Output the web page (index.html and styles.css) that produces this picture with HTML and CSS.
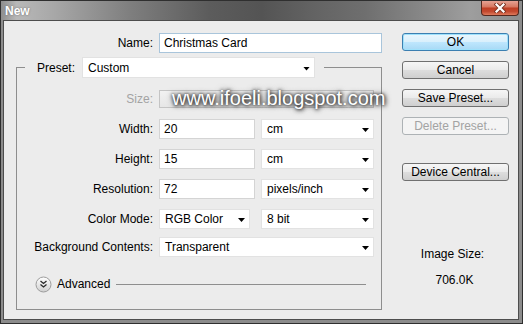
FILE: index.html
```html
<!DOCTYPE html>
<html>
<head>
<meta charset="utf-8">
<title>New</title>
<link rel="stylesheet" href="styles.css">
</head>
<body>
<div class="window">
  <div class="titlebar">
    <span class="title">New</span>
    <div class="close">
      <svg width="12" height="10" viewBox="0 0 12 10">
        <path d="M2.5 1.5 L9.5 8.5 M9.5 1.5 L2.5 8.5" stroke="#7a3424" stroke-width="4" stroke-linecap="square"/>
        <path d="M2.5 1.5 L9.5 8.5 M9.5 1.5 L2.5 8.5" stroke="#ffffff" stroke-width="2.2" stroke-linecap="square"/>
      </svg>
    </div>
  </div>
  <div class="client">
    <div class="left">
      <div class="name-row">
        <span class="label name-label">Name:</span>
        <div class="field input focus">Christmas Card</div>
      </div>
      <fieldset class="group">
        <legend class="preset">
          <span class="preset-label">Preset:</span>
          <div class="field select preset-select">Custom<span class="arrow"></span></div>
        </legend>
        <div class="rows">
          <div class="row row-size">
            <span class="label disabled">Size:</span>
            <div class="field disabled-field wide"></div>
          </div>
          <div class="row">
            <span class="label">Width:</span>
            <div class="field input num">20</div>
            <div class="field select unit">cm<span class="arrow"></span></div>
          </div>
          <div class="row">
            <span class="label">Height:</span>
            <div class="field input num">15</div>
            <div class="field select unit">cm<span class="arrow"></span></div>
          </div>
          <div class="row">
            <span class="label">Resolution:</span>
            <div class="field input num">72</div>
            <div class="field select unit">pixels/inch<span class="arrow"></span></div>
          </div>
          <div class="row">
            <span class="label">Color Mode:</span>
            <div class="field select mode">RGB Color<span class="arrow"></span></div>
            <div class="field select unit">8 bit<span class="arrow"></span></div>
          </div>
          <div class="row row-bg">
            <span class="label">Background Contents:</span>
            <div class="field select wide">Transparent<span class="arrow"></span></div>
          </div>
        </div>
        <div class="advanced">
          <svg class="adv-icon" width="17" height="17" viewBox="0 0 17 17">
            <defs>
              <linearGradient id="g" x1="0" y1="0" x2="0" y2="1">
                <stop offset="0" stop-color="#ffffff"/>
                <stop offset="1" stop-color="#cfcfcf"/>
              </linearGradient>
            </defs>
            <circle cx="8.5" cy="8.5" r="7.5" fill="url(#g)" stroke="#9c9c9c"/>
            <path d="M5.5 5 L8.5 7.5 L11.5 5 M5.5 8.5 L8.5 11 L11.5 8.5" fill="none" stroke="#2a2a2a" stroke-width="1.3"/>
          </svg>
          <span class="adv-text">Advanced</span>
          <span class="adv-line"></span>
        </div>
      </fieldset>
    </div>
    <div class="right">
      <div class="btn ok">OK</div>
      <div class="btn">Cancel</div>
      <div class="btn">Save Preset...</div>
      <div class="btn off">Delete Preset...</div>
      <div class="btn device">Device Central...</div>
      <div class="img-label">Image Size:</div>
      <div class="img-value">706.0K</div>
    </div>
  </div>
  <div class="watermark">www.ifoeli.blogspot.com</div>
</div>
</body>
</html>
```

FILE: styles.css
```css
body {
  margin: 0;
  font-family: "Liberation Sans", Arial, sans-serif;
  font-size: 12px;
  color: #000;
}

.window {
  position: relative;
  width: 523px;
  height: 324px;
  box-sizing: border-box;
  border: 1px solid #2f2f2f;
  background: #8c8c8c;
}

.titlebar {
  height: 19px;
  display: flex;
  justify-content: space-between;
  align-items: flex-start;
  background: linear-gradient(90deg, #8e8e8e 0, #b8b8b8 3%, #a8a8a8 10%, #7e7e7e 25%, #5c5c5c 40%, #545454 50%, #636363 60%, #6f6f6f 70%, #8a8a8a 82%, #9e9e9e 90%, #8c8c8c 100%);
}

.title {
  color: #fff;
  font-weight: bold;
  font-size: 12px;
  line-height: 14px;
  margin: 3px 0 0 4px;
  text-shadow: 0 0 2px #666;
}

.close {
  width: 38px;
  height: 15px;
  margin-right: 3px;
  box-sizing: border-box;
  border: 1px solid #55281e;
  border-top: 0;
  border-radius: 0 0 4px 4px;
  background: linear-gradient(#e6a293 0, #d77a64 40%, #bf3f24 52%, #c34a30 75%, #df7a5c 100%);
  display: flex;
  align-items: center;
  justify-content: center;
}

.client {
  margin: 0 3px 3px 2px;
  height: 298px;
  border: 1px solid #4d4d4d;
  background: #ececec;
  display: flex;
}

.left {
  width: 378px;
  padding-top: 12px;
}

.label {
  text-align: right;
  line-height: 20px;
  flex: none;
}

.name-row {
  display: flex;
  align-items: center;
  gap: 6px;
}

.name-label {
  width: 149px;
}

.field {
  box-sizing: border-box;
  height: 20px;
  background: #fff;
  display: flex;
  align-items: center;
  white-space: nowrap;
}

.input {
  border: 1px solid #d4d4d4;
  padding-left: 4px;
}

.input.focus {
  width: 226px;
  border-color: #a9c5db;
}

.select {
  border: 1px solid #e2e2e2;
  padding: 0 4px 0 5px;
  justify-content: space-between;
}

.arrow {
  width: 7px;
  height: 4px;
  background: #000;
  clip-path: polygon(0 0, 100% 0, 50% 100%);
  margin-top: 2px;
}

.group {
  margin: 4px 0 0 12px;
  width: 366px;
  min-width: 0;
  box-sizing: border-box;
  border: 1px solid #8e8e8e;
  padding: 0 0 17px 0;
}

.preset {
  display: flex;
  align-items: center;
  gap: 7px;
  margin-left: 8px;
  padding: 0 9px 0 12px;
}

.preset-select {
  width: 233px;
  height: 21px;
}

.rows {
  margin-top: 11px;
  display: flex;
  flex-direction: column;
  gap: 10px;
}

.row {
  display: flex;
  align-items: center;
  gap: 6px;
}

.row .label {
  width: 136px;
}

.row-size .field {
  height: 18px;
}

.row-bg {
  margin-top: -2px;
}

.disabled {
  color: #a3a3a3;
}

.disabled-field {
  border: 1px solid #c4c4c4;
  background: linear-gradient(#f2f2f2, #e6e6e6);
}

.wide {
  width: 215px;
}

.num {
  width: 96px;
}

.unit {
  width: 113px;
}

.mode {
  width: 91px;
  margin-right: 5px;
}

.advanced {
  margin-top: 19px;
  height: 16px;
  display: flex;
  align-items: center;
  padding-left: 18px;
}

.adv-icon {
  flex: none;
}

.adv-text {
  margin-left: 5px;
  line-height: 16px;
}

.adv-line {
  flex: 1;
  height: 1px;
  background: #8e8e8e;
  margin: 0 15px 0 6px;
}

.right {
  margin-left: 20px;
  width: 107px;
  padding-top: 12px;
  display: flex;
  flex-direction: column;
}

.btn {
  box-sizing: border-box;
  height: 18px;
  border: 1px solid #707070;
  border-radius: 3px;
  background: linear-gradient(#f6f6f6 0, #ebebeb 48%, #dddddd 52%, #cfcfcf 100%);
  text-align: center;
  line-height: 16px;
}

.btn + .btn {
  margin-top: 10px;
}

.btn.ok {
  border-color: #3c7fb1;
  background: linear-gradient(#eaf6fd 0, #d9f0fc 48%, #bee6fd 52%, #a7d9f5 100%);
  box-shadow: inset 0 0 0 1px #9fe1fb;
}

.btn.off {
  border-color: #adb2b5;
  background: #f4f4f4;
  color: #a3a3a3;
}

.btn.device {
  margin-top: 28px;
}

.img-label {
  margin-top: 66px;
  text-align: center;
  line-height: 14px;
  padding-right: 6px;
}

.img-value {
  margin-top: 12px;
  text-align: center;
  line-height: 14px;
  padding-right: 2px;
}

.watermark {
  position: absolute;
  left: 171px;
  top: 87px;
  font-family: "Liberation Sans", Arial, sans-serif;
  font-size: 20px;
  line-height: 20px;
  color: #fff;
  text-shadow: 0 0 3px #3a3a3a, 1px 1px 4px #222, 0 0 6px #555;
  white-space: nowrap;
}
```
